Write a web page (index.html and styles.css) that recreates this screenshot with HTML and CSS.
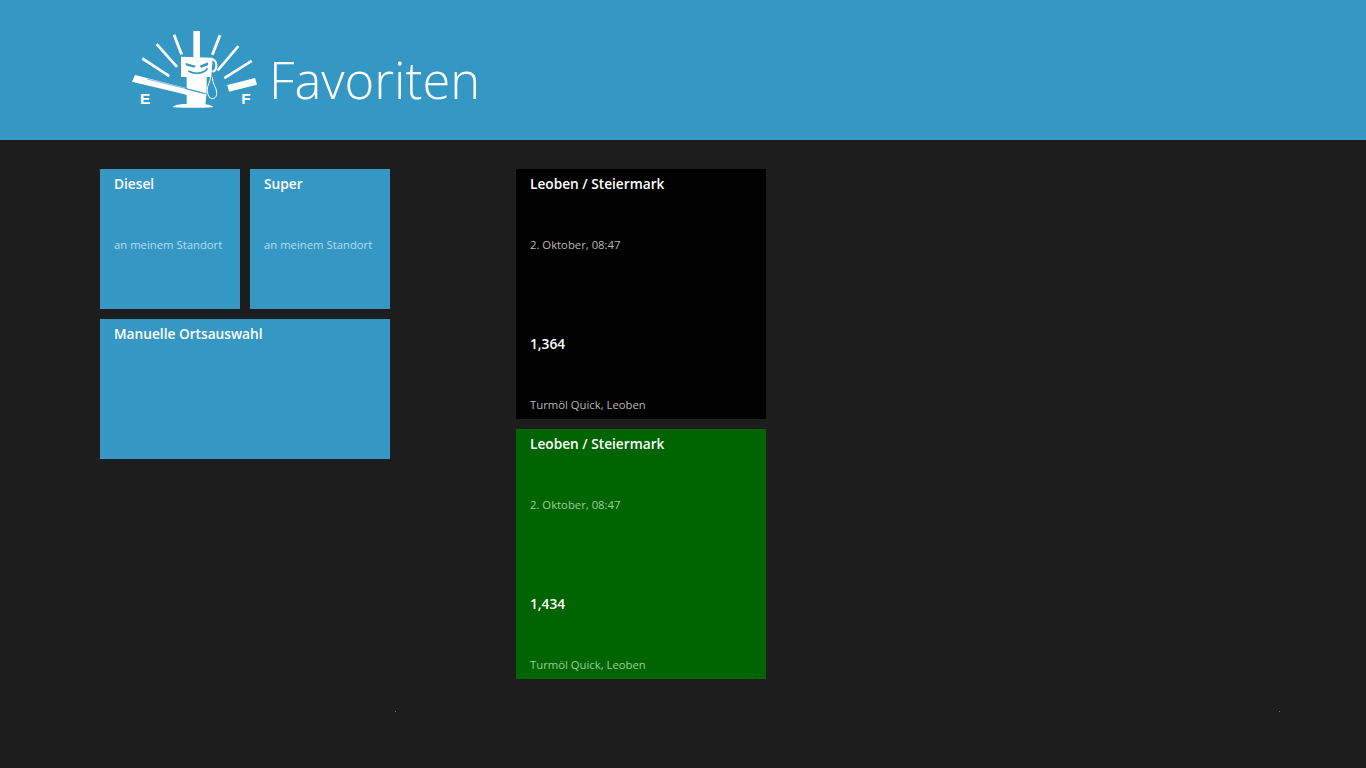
FILE: index.html
```html
<!DOCTYPE html>
<html lang="de">
<head>
<meta charset="utf-8">
<title>Favoriten</title>
<link rel="stylesheet" href="styles.css">
</head>
<body>
<header class="header">
  <svg class="logo" viewBox="0 0 420 270" aria-hidden="true">
    <g fill="#fff">
      <rect x="205" y="18" width="20" height="80"/>
      <path d="M143 31l8-3 23 59-8 3zM92 60l6-5 61 68-6 5zM50 104l4-7 81 53-4 7zM281 29l8 3-23 59-8-3zM337 61l6 5-62 73-6-5zM378 104l4 7-82 52-4-7z"/>
      <path d="M307 180l83-21 6 20-84 21z"/>
      <path d="M30 150l150 38 65 17-4 20-75-20L21 170z"/>
      <path d="M168 95l95 3-4 58H168z"/>
      <path d="M185 156h60v44l-4 40h-56z"/>
      <path d="M143 246c6-8 30-10 61-10s55 2 61 10c-10 3-110 3-122 0z"/>
    </g>
    <g fill="none">
      <path d="M66 162l110 27 58 16" stroke="#3598c4" stroke-width="2"/>
      <path d="M180 190l65 17" stroke="#3598c4" stroke-width="3"/>
      <path d="M257 156c-1 14-10 24-10 38 0 15 6 27 14 27 10 0 15-8 14-20-1-14-13-24-13-44" stroke="#fff" stroke-width="3"/>
      <path d="M259 102c9 2 14 8 15 16 1 10-1 16-6 20l-6 2" stroke="#fff" stroke-width="6"/>
      <path d="M190 138c16 10 46 10 58-8" stroke="#3598c4" stroke-width="5"/>
    </g>
    <path d="M182 114l30 8-4 6-26-7zM249 112l-25 10 4 6 21-7z" fill="#3598c4"/>
    <text class="logo-letter" x="45" y="237">E</text>
    <text class="logo-letter" x="349" y="237">F</text>
  </svg>
  <h1 class="title">Favoriten</h1>
</header>
<main class="content">
  <section class="group group-left">
    <a class="tile tile-small blue">
      <span class="tile-title">Diesel</span>
      <span class="tile-sub blue-sub">an meinem Standort</span>
    </a>
    <a class="tile tile-small blue">
      <span class="tile-title">Super</span>
      <span class="tile-sub blue-sub">an meinem Standort</span>
    </a>
    <a class="tile tile-wide blue">
      <span class="tile-title">Manuelle Ortsauswahl</span>
    </a>
  </section>
  <section class="group group-right">
    <a class="tile tile-large black">
      <span class="tile-title">Leoben / Steiermark</span>
      <span class="tile-sub grey-sub">2. Oktober, 08:47</span>
      <span class="tile-price">1,364</span>
      <span class="tile-station grey-sub">Turmöl Quick, Leoben</span>
    </a>
    <a class="tile tile-large green">
      <span class="tile-title">Leoben / Steiermark</span>
      <span class="tile-sub green-sub">2. Oktober, 08:47</span>
      <span class="tile-price">1,434</span>
      <span class="tile-station green-sub">Turmöl Quick, Leoben</span>
    </a>
  </section>
</main>
<i class="dot dot-a"></i>
<i class="dot dot-b"></i>
</body>
</html>
```
FILE: styles.css
```css
* { box-sizing: border-box; }
html, body { margin: 0; height: 100%; }
body {
  position: relative;
  width: 1366px;
  height: 768px;
  overflow: hidden;
  background: #1d1d1d;
  color: #fff;
  font-family: "Open Sans", "Noto Sans", sans-serif;
}
.header {
  height: 140px;
  background: #3598c4;
  display: flex;
  align-items: flex-start;
  padding: 25px 0 0 125px;
}
.logo { width: 140px; height: 90px; flex: none; }
.logo-letter { font: bold 46px "Liberation Sans", sans-serif; fill: #fff; }
.title {
  margin: 23px 0 0 4px;
  font-size: 50.7px;
  line-height: 64px;
  font-weight: 300;
}
.content {
  display: flex;
  align-items: flex-start;
  gap: 126px;
  padding: 29px 0 0 100px;
}
.group { display: grid; gap: 10px; }
.group-left { grid-template-columns: 140px 140px; }
.group-right { grid-template-columns: 250px; }
.tile {
  position: relative;
  display: block;
  padding: 6px 14px;
}
.tile-small { height: 140px; }
.tile-wide { height: 140px; grid-column: span 2; }
.tile-large { height: 250px; }
.blue { background: #3598c4; }
.black { background: #000; }
.green { background: #006400; }
.tile-title, .tile-price {
  display: block;
  font-size: 13.7px;
  line-height: 18px;
  font-weight: 600;
  color: #fff;
}
.tile-sub, .tile-station {
  display: block;
  font-size: 11.3px;
  line-height: 16px;
}
.tile-sub { margin-top: 44px; }
.tile-price { margin-top: 82px; }
.tile-station { margin-top: 44px; }
.blue-sub { color: #b4deef; }
.grey-sub { color: #b8b8b8; }
.green-sub { color: #9ad09a; }
.dot { position: absolute; top: 711px; width: 1px; height: 1px; background: #777; }
.dot-a { left: 395px; }
.dot-b { left: 1279px; }
```
